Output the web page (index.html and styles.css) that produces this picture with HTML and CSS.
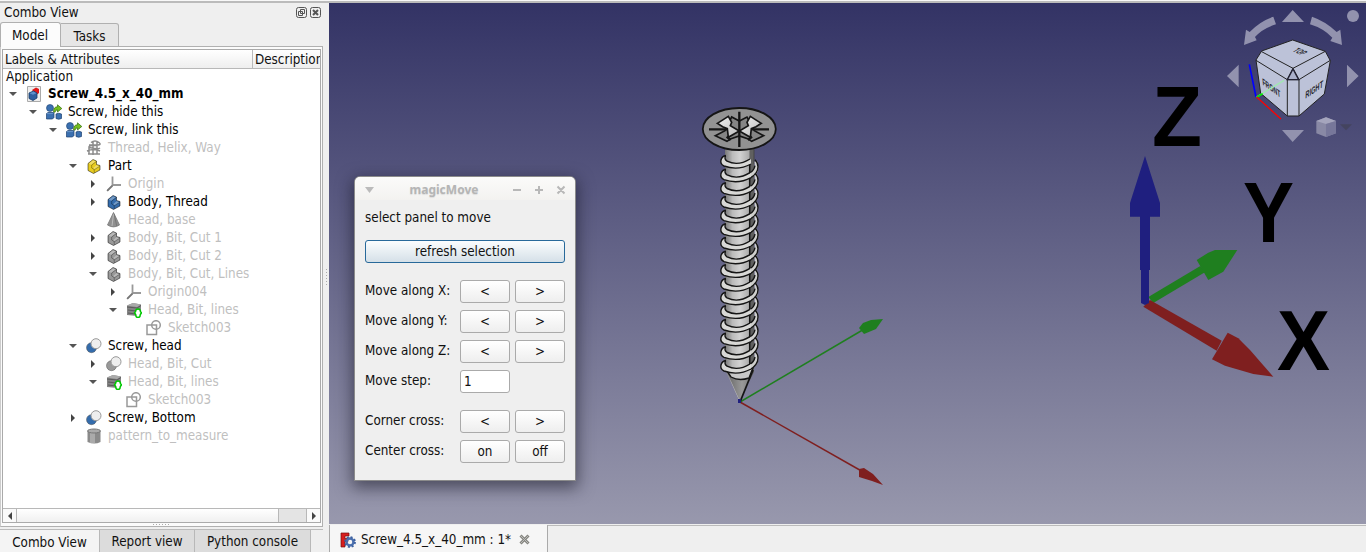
FILE: index.html
```html
<!DOCTYPE html>
<html lang="en">
<head>
<meta charset="utf-8">
<title>Screw_4.5_x_40_mm</title>
<link rel="stylesheet" href="styles.css">
</head>
<body>
<svg class="defs" width="0" height="0">
  <defs>
    <linearGradient id="steel"><stop offset="0" stop-color="#777"/><stop offset=".3" stop-color="#bbb"/><stop offset=".6" stop-color="#d2d2d2"/><stop offset="1" stop-color="#a8a8a8"/></linearGradient>
    <linearGradient id="tip"><stop offset="0" stop-color="#666"/><stop offset=".6" stop-color="#999"/><stop offset="1" stop-color="#777"/></linearGradient>
    <linearGradient id="arm" x1="0" y1="0" x2="1" y2="1"><stop offset="0" stop-color="#f0f0f0"/><stop offset="1" stop-color="#bbb"/></linearGradient>
    <symbol id="down" viewBox="0 0 10 10"><path d="M1 3h8L5 7z" fill="#555"/></symbol>
    <symbol id="right" viewBox="0 0 10 10"><path d="M3 1v8l4-4z" fill="#444"/></symbol>
    <symbol id="doc" viewBox="0 0 16 16"><path d="M1.500.5h13v15h-13z" fill="#eee" stroke="#aaa"/><path d="M6 4l4-2.500 3 1.500v4l-3 2z" fill="#e01818"/><path d="M3 7l4.500-2L11 7v5l-4 2.500L3 12.500z" fill="#2f5f9f" stroke="#153a66" stroke-width=".8"/><path d="M3.500 7.200l4-1.700 3 1.700L7 8.800z" fill="#5d90cc"/></symbol>
    <symbol id="group" viewBox="0 0 16 16"><circle cx="4" cy="4" r="3.500" fill="#3b70b0" stroke="#1c4170" stroke-width=".6"/><path d="M.5 9.500l1.500-1h6v5L6.500 15h-6z" fill="#3b70b0" stroke="#1c4170" stroke-width=".7"/><path d="M.8 9.600h5.500l1.200-.9" stroke="#7fa9d8" stroke-width=".7" fill="none"/><path d="M10 10q2.500-1.500 5.500 0v4.500q-2.800 1.500-5.500 0z" fill="#3b70b0" stroke="#1c4170" stroke-width=".7"/><path d="M7.500 7.800q0-5 4-5V.8l4.300 3.700-4.300 3.500V5.800q-2-.2-2.500 2.500z" fill="#75c020" stroke="#32680c" stroke-width=".7"/></symbol>
    <symbol id="helix" viewBox="0 0 16 16"><g fill="none" stroke="#8c8c8c" stroke-width="1.500"><path d="M5 2.500q4-3 8 0t-7 3q-6 1 0 2.500t8 0M1 11q7-3 13 0M2 14h12M7 2v13M11 2v12M3 5h10M3 7v7"/></g></symbol>
    <symbol id="solid" viewBox="0 0 16 16"><path d="M2 5.500l5-4 3.500 1.500v3.500l3.500 1v4.500l-6.500 3.500L2 12.500z" fill="currentColor" stroke="#000" stroke-opacity=".55" stroke-width=".9"/><path d="M2.800 5.700L7 2.300l2.800 1.200-4.500 3.300zM7 10.200l3.500-3 3 1-4.500 3z" fill="#fff" fill-opacity=".32"/><path d="M5.700 7v3l2.500 1.500v3.300M8.500 11.600l5-3.300M5.700 7l4.500-3.300" fill="none" stroke="#000" stroke-opacity=".4" stroke-width=".8"/></symbol>
    <symbol id="origin" viewBox="0 0 16 16"><path d="M6.500.5v9M6.500 9H15M6.500 9.500L1.500 14.500" fill="none" stroke="#999" stroke-width="1.800"/><path d="M1 15l5.500-5.500" stroke="#777" stroke-width="1.500"/></symbol>
    <symbol id="cone" viewBox="0 0 16 16"><path d="M7.500.5L13.500 13q-6 3.800-12 0z" fill="#909090" stroke="#777" stroke-width=".8"/><path d="M7.500 2L6 14" stroke="#bbb"/><path d="M8.200 2l2.500 12" stroke="#777"/></symbol>
    <symbol id="slab" viewBox="0 0 16 16"><path d="M1 3.500L7 1l8 1.500v9l-4 2.500-10-1z" fill="#858585"/><path d="M1 3.500L7 1l8 1.500-4 2.500z" fill="#aaa"/><path d="M1 5l10 1 4-2.500M2 8l8 1 4-2M2 11l8 1" stroke="#5a5a5a" fill="none"/><path d="M12 7q2.500 0 2.500 2.800l1 1-1.200 1.700q0 3-2.300 3t-2.300-3L8.500 10.800l1-1Q9.500 7 12 7z" fill="#fff" stroke="#00c800" stroke-width="1.500"/></symbol>
    <symbol id="sketch" viewBox="0 0 16 16"><g fill="none" stroke="#999" stroke-width="1.500"><path d="M1 5h9.500v9.500H1z"/><circle cx="10" cy="5" r="4.300"/></g></symbol>
    <symbol id="cut" viewBox="0 0 16 16"><circle cx="5.500" cy="9.700" r="5" fill="currentColor" stroke="#555" stroke-width=".5"/><circle cx="10" cy="5.700" r="5" fill="#eee" stroke="#999"/></symbol>
    <symbol id="cyl" viewBox="0 0 16 16"><path d="M1.500 3q6-3 13 0v11q-6 3-13 0z" fill="#8a8a8a"/><path d="M4 4h5v11H4z" fill="#aaa"/><ellipse cx="8" cy="3" rx="6.500" ry="2" fill="#aaa" stroke="#777"/></symbol>
    <g id="band">
      <path d="M726-6.500Q722-6 721-2Q720 2 724 4Q738 8.500 751 2L751-3Q738 4 727-1Q724-3 726-6.500z" fill="#d8d8d6"/>
      <path d="M726-6.500Q722-6 721-2Q720 2 724 4Q738 9 751 2M725.500-6Q724-3 727-.8Q738 4.500 750-3" fill="none" stroke="#151515" stroke-width="1.400"/>
    </g>
    <g id="ring">
      <path d="M750-3Q756-7 754.500-14L757-15Q760-6 756-1.500L751 2z" fill="#cfcfcd"/>
      <path d="M750 2.500Q758-2 758-9Q758-13 755-16M750-3Q754-5 755-10" fill="none" stroke="#151515" stroke-width="1.400"/>
      <use href="#band"/>
    </g>
  </defs>
</svg>
<div class="app">
  <aside class="dock">
    <header class="dock-title"><span>Combo View</span>
      <svg width="25" height="11" viewBox="0 0 25 11"><g fill="none" stroke="#555"><rect x=".5" y=".5" width="10" height="10" rx="2"/><path d="M4.500 2.500h4v4h-4zM2.500 4.500h4v4h-4z"/><rect x="14.500" y=".5" width="10" height="10" rx="2"/><path d="M17 3l5 5M22 3l-5 5" stroke-width="2"/></g></svg>
    </header>
    <nav class="tabs"><span class="tab active">Model</span><span class="tab">Tasks</span></nav>
    <section class="pane">
      <div class="tree">
        <div class="thead"><span class="c1">Labels &amp; Attributes</span><span class="c2">Description</span></div>
        <div class="app-row">Application</div>
        <ul class="rows">
          <li class="d0 bold"><svg class="ar"><use href="#down"/></svg><svg class="ic"><use href="#doc"/></svg>Screw_4.5_x_40_mm</li>
          <li class="d1"><svg class="ar"><use href="#down"/></svg><svg class="ic"><use href="#group"/></svg>Screw, hide this</li>
          <li class="d2"><svg class="ar"><use href="#down"/></svg><svg class="ic"><use href="#group"/></svg>Screw, link this</li>
          <li class="d3 off"><svg class="ar"></svg><svg class="ic"><use href="#helix"/></svg>Thread, Helix, Way</li>
          <li class="d3"><svg class="ar"><use href="#down"/></svg><svg class="ic yellow"><use href="#solid"/></svg>Part</li>
          <li class="d4 off"><svg class="ar"><use href="#right"/></svg><svg class="ic"><use href="#origin"/></svg>Origin</li>
          <li class="d4"><svg class="ar"><use href="#right"/></svg><svg class="ic blue"><use href="#solid"/></svg>Body, Thread</li>
          <li class="d4 off"><svg class="ar"></svg><svg class="ic"><use href="#cone"/></svg>Head, base</li>
          <li class="d4 off"><svg class="ar"><use href="#right"/></svg><svg class="ic gray"><use href="#solid"/></svg>Body, Bit, Cut 1</li>
          <li class="d4 off"><svg class="ar"><use href="#right"/></svg><svg class="ic gray"><use href="#solid"/></svg>Body, Bit, Cut 2</li>
          <li class="d4 off"><svg class="ar"><use href="#down"/></svg><svg class="ic gray"><use href="#solid"/></svg>Body, Bit, Cut, Lines</li>
          <li class="d5 off"><svg class="ar"><use href="#right"/></svg><svg class="ic"><use href="#origin"/></svg>Origin004</li>
          <li class="d5 off"><svg class="ar"><use href="#down"/></svg><svg class="ic"><use href="#slab"/></svg>Head, Bit, lines</li>
          <li class="d6 off"><svg class="ar"></svg><svg class="ic"><use href="#sketch"/></svg>Sketch003</li>
          <li class="d3"><svg class="ar"><use href="#down"/></svg><svg class="ic blue"><use href="#cut"/></svg>Screw, head</li>
          <li class="d4 off"><svg class="ar"><use href="#right"/></svg><svg class="ic gray"><use href="#cut"/></svg>Head, Bit, Cut</li>
          <li class="d4 off"><svg class="ar"><use href="#down"/></svg><svg class="ic"><use href="#slab"/></svg>Head, Bit, lines</li>
          <li class="d5 off"><svg class="ar"></svg><svg class="ic"><use href="#sketch"/></svg>Sketch003</li>
          <li class="d3"><svg class="ar"><use href="#right"/></svg><svg class="ic blue"><use href="#cut"/></svg>Screw, Bottom</li>
          <li class="d3 off"><svg class="ar"></svg><svg class="ic"><use href="#cyl"/></svg>pattern_to_measure</li>
        </ul>
        <div class="hscroll"><span class="sb"><svg width="10" height="10" viewBox="0 0 10 10"><path d="M7 1v8L3 5z" fill="#444"/></svg></span><span class="thumb"></span><span class="track"></span><span class="sb"><svg width="10" height="10"><use href="#right"/></svg></span></div>
      </div>
      <div class="grip"></div>
    </section>
    <nav class="btabs"><span class="active b1">Combo View</span><span class="b2">Report view</span><span class="b3">Python console</span></nav>
  </aside>
  <div class="splitter"></div>
  <main class="view">
    <svg class="scene" viewBox="329 3 1037 521" width="1037" height="521">
      <path d="M740 402L866 328" stroke="#1f7f1f" stroke-width="1.500"/>
      <path d="M859 328l4-5 8-3 12-1-7 10-12 5z" fill="#1f7f1f"/>
      <path d="M740 402l125 71" stroke="#7f1f1f" stroke-width="1.500"/>
      <path d="M859 469l5-1 9 6 10 11-11-4-13-4z" fill="#7f1f1f"/>
      <path d="M725 148h25v226l-10 28-11-24-4-8z" fill="url(#steel)"/>
      <path d="M749.500 148h4.500v224l-4.500 9z" fill="#606060"/>
      <path d="M749.700 160v215" stroke="#151515" stroke-width="1.500"/>
      <path d="M754 148v16" stroke="#444"/>
      <path d="M727 372h25l-12 29.500z" fill="url(#tip)"/>
      <path d="M753 370l-13 32" stroke="#151515" stroke-width="1.800"/>
      <path d="M725 368l6 9q8 4.500 18 1l5-13" fill="#c8c8c8" stroke="#151515" stroke-width="1.400"/>
      <use href="#band" y="162"/><use href="#ring" y="175.700"/><use href="#ring" y="189.300"/><use href="#ring" y="203"/><use href="#ring" y="216.700"/><use href="#ring" y="230.300"/><use href="#ring" y="244"/><use href="#ring" y="257.700"/><use href="#ring" y="271.300"/><use href="#ring" y="285"/><use href="#ring" y="298.700"/><use href="#ring" y="312.300"/><use href="#ring" y="326"/><use href="#ring" y="339.700"/><use href="#ring" y="353.300"/><use href="#ring" y="367"/>
      <ellipse cx="739.300" cy="129" rx="36.500" ry="21" fill="#929292" stroke="#151515" stroke-width="1.800"/>
      <g transform="translate(690 95) scale(.3333)" stroke="#151515" stroke-width="5" stroke-linejoin="miter">
        <path d="M76 122l29-15 20-41 23 12 23-12 22 41 28 15-36 17-12-8-25-8-25 8-12 8z" fill="#858585"/>
        <path d="M82 85l33-21 10 18-4 10 27 16-33 19-3-26-14-6z" fill="url(#arm)"/>
        <path d="M214 85l-33-21-10 18 4 10-27 16 33 19 3-26 14-6z" fill="url(#arm)"/>
        <path d="M148 50v106M57 103h55M183 103h54" stroke-width="7" fill="none"/>
        <path d="M110 125l12 10M186 125l-12 10" stroke-width="7"/>
      </g>
      <path d="M738 399h3v4h-3z" fill="#1f1f7f"/>
      <path d="M1148.300 297l52-31 5 6-52 31z" fill="#1f7f1f"/>
      <path d="M1196.700 260l11.600-7.300 6.700-2.700h22.300l-14 21.700-15 8.300z" fill="#1f7f1f"/>
      <path d="M1150 300l71.700 40.700-5 10-73.400-44z" fill="#7f1f1f"/>
      <path d="M1227.700 332.700l10.600 5.600 11.700 11.700 23.300 26.700-20-2.700-28.300-8.300-13-6.400z" fill="#7f1f1f"/>
      <path d="M1145 156l15 47v13.700h-10V270h-1v33l-4 2-4-2v-33h-1v-53.300h-10V203z" fill="#1f1f7f"/>
      <g class="axis"><text x="1152" y="146" textLength="50" lengthAdjust="spacingAndGlyphs">Z</text><text x="1243" y="242" textLength="51" lengthAdjust="spacingAndGlyphs">Y</text><text x="1277" y="370" textLength="53" lengthAdjust="spacingAndGlyphs">X</text></g>
      <g transform="translate(1210 0) scale(.3333)">
        <g fill="#9292ae"><path d="M248 30l34 36h-66zM86 194v68l-35-34zM411 194v68l35-34zM216 390h66l-34 36z"/><circle cx="429" cy="48" r="18"/>
          <path d="M190 50l8 23q-40 12-63 38l5 10-38 14 6-46 11 7q30-32 71-46zM306 50l-6 23q40 12 67 40l-6 10 35 12-5-46-11 7q-33-32-74-46z"/></g>
        <path d="M248 120l98 34 15 28-18 100-76 66h-35l-80-68-14-100 17-27z" fill="#bcc2d8" stroke="#222" stroke-width="3"/>
        <g fill="none" stroke="#222" stroke-width="3"><path d="M155 155l94 50 97-51M138 181l94 58h35l94-58M232 239v109M267 239v109M249 205l-17 34M249 205l18 34"/></g>
        <path d="M249 207l17 32h-34z" fill="#aab0ca" stroke="#223" stroke-width="4"/>
        <g class="cube"><text transform="matrix(.82 .6 .1 1 158 254)" textLength="66" lengthAdjust="spacingAndGlyphs">FRONT</text><text transform="matrix(.82 -.55 -.05 1 286 296)" textLength="64" lengthAdjust="spacingAndGlyphs">RIGHT</text><text transform="matrix(.8 .3 -.9 .5 246 154)" textLength="38" lengthAdjust="spacingAndGlyphs">TOP</text></g>
        <path d="M118 193l20 98" stroke="#00f" stroke-width="5"/><path d="M140 291l82-50" stroke="#a0e8b0" stroke-width="4"/><path d="M140 291l18-10" stroke="#0e0" stroke-width="5"/><path d="M140 291l73 66" stroke="#f00" stroke-width="4"/>
        <path d="M348 352l30 11v37l-30 11-29-11v-37z" fill="#8989a5"/><path d="M319 363l29 9 30-9-30-11z" fill="#a5a5bd"/><path d="M348 372l30-9v37l-30 11z" fill="#77779a"/><path d="M390 373h36l-18 18z" fill="#44445f"/>
      </g>
    </svg>
    <section class="dialog">
      <header><svg width="9" height="6" viewBox="0 0 9 6"><path d="M0 0h9L4.500 6z" fill="#bbb"/></svg><b>magicMove</b><svg width="53" height="10" viewBox="0 0 53 10" fill="none" stroke="#b8b8b8" stroke-width="2"><path d="M0 5h8M22 5h8M26 1v8M44.500 1.500l7 7M51.500 1.500l-7 7"/></svg></header>
      <p>select panel to move</p>
      <button class="refresh">refresh selection</button>
      <div class="form">
        <label>Move along X:</label><button>&lt;</button><button>&gt;</button>
        <label>Move along Y:</label><button>&lt;</button><button>&gt;</button>
        <label>Move along Z:</label><button>&lt;</button><button>&gt;</button>
        <label>Move step:</label><input value="1">
      </div>
      <div class="form second">
        <label>Corner cross:</label><button>&lt;</button><button>&gt;</button>
        <label>Center cross:</label><button>on</button><button>off</button>
      </div>
    </section>
    <footer class="docbar"><div class="doctab"><svg width="16" height="16" viewBox="0 0 16 16"><path d="M1 1h8v3H5v2.500h3v3H5V15H1z" fill="#d81e1e" stroke="#701010" stroke-width=".7"/><circle cx="10" cy="10" r="3.500" fill="none" stroke="#4a6fae" stroke-width="2.500"/><circle cx="10" cy="10" r="5" fill="none" stroke="#3d619f" stroke-width="1.800" stroke-dasharray="2 1.930"/></svg><span>Screw_4.5_x_40_mm : 1*</span><svg width="11" height="11" viewBox="0 0 11 11"><path d="M1.500 1.500l8 8M9.500 1.500l-8 8" stroke="#85857f" stroke-width="3"/><path d="M2 2l7 7M9 2L2 9" stroke="#bbb"/></svg></div></footer>
  </main>
</div>
</body>
</html>
```
FILE: styles.css
```css
* { box-sizing: border-box; }
body { margin: 0; background: #efefef; color: #111; font: 13.33px/18px "DejaVu Sans Condensed", "DejaVu Sans", sans-serif; font-stretch: condensed; overflow: hidden; }
.defs { position: absolute; }
.app { display: flex; width: 1366px; height: 552px; border-top: 1px solid #f8f8f8; }
.dock { width: 323px; display: flex; flex-direction: column; border-top: 2px solid #bbb; }
.splitter { width: 6px; border-top: 2px solid #bbb; display: flex; flex-direction: column; align-items: center; justify-content: center; }
.splitter::before { content: ""; width: 1px; height: 17px; background: repeating-linear-gradient(#aaa 0 1px, transparent 1px 3px); }
.dock-title { height: 20px; padding: 0 2px 0 4px; display: flex; justify-content: space-between; align-items: center; }
.tabs { display: flex; align-items: flex-end; height: 25px; margin-bottom: -1px; position: relative; }
.tab { height: 24px; width: 58px; border: 1px solid #b0b0b0; border-left: 0; border-radius: 0 3px 0 0; background: #e6e6e6; text-align: center; line-height: 25px; }
.tab.active { height: 25px; width: 61px; background: #fcfcfc; border-left: 1px solid #b0b0b0; border-bottom: 0; border-radius: 3px 3px 0 0; padding-right: 1px; }
.pane { height: 481px; border: 1px solid #b0b0b0; border-left-color: #ccc; padding: 2px 1px 0; background: #fbfbfb; }
.tree { height: 474px; width: 319px; border: 1px solid #aaa; background: #fff; display: flex; flex-direction: column; }
.thead { height: 19px; display: flex; flex: none; background: linear-gradient(#fff, #eee); border-bottom: 1px solid #b8b8b8; overflow: hidden; line-height: 19px; }
.c1 { width: 250px; padding-left: 2px; border-right: 1px solid #bbb; }
.c2 { flex: 1; width: 0; overflow: hidden; padding-left: 2px; white-space: nowrap; }
.app-row { height: 16px; line-height: 16px; padding-left: 3px; }
.rows { list-style: none; padding: 0; margin: 0; flex: 1; }
.rows li { display: flex; align-items: center; height: 18px; white-space: nowrap; color: #000; }
.rows li.off { color: #bfbfbf; }
.bold { font-weight: bold; }
.ar { width: 10px; height: 10px; margin-right: 8px; flex: none; }
.ic { width: 16px; height: 16px; margin-right: 6px; flex: none; }
.yellow { color: #e8cc20; } .blue { color: #346cac; } .gray { color: #999; }
.d0 { padding-left: 5px; } .d1 { padding-left: 25px; } .d2 { padding-left: 45px; } .d3 { padding-left: 65px; }
.d4 { padding-left: 85px; } .d5 { padding-left: 105px; } .d6 { padding-left: 125px; }
.hscroll { height: 14px; display: flex; flex: none; border-top: 1px solid #b8b8b8; }
.sb { width: 13px; display: flex; align-items: center; justify-content: center; background: #fafafa; }
.thumb { width: 263px; border: solid #b8b8b8; border-width: 0 1px; background: linear-gradient(#fff, #f0f0f0); }
.track { flex: 1; background: #e4e4e4; border-right: 1px solid #b8b8b8; }
.grip { width: 17px; height: 1px; margin: 1px auto; background: repeating-linear-gradient(90deg, #aaa 0 1px, transparent 1px 3px); }
.btabs { display: flex; margin-top: 2px; border-top: 1px solid #bbb; height: 23px; }
.btabs span { background: #dcdcdc; border-right: 1px solid #b8b8b8; text-align: center; line-height: 23px; }
.btabs .active { background: #f4f4f4; line-height: 25px; }
.b1 { width: 100px; } .b2 { width: 95px; } .b3 { width: 116px; }
.view { width: 1037px; position: relative; border-top: 2px solid #bbb; }
.scene { display: block; background: linear-gradient(#333365, #9898ad); }
.axis text { font: bold 85.500px "Liberation Sans", sans-serif; fill: #000; }
.cube text { font: bold 30px "Liberation Sans", sans-serif; fill: #25262c; }
.dialog { position: absolute; left: 26px; top: 174px; width: 220px; height: 303px; background: #efefef; border-radius: 5px 5px 0 0; box-shadow: 0 0 0 1px #8b8b8b, 0 5px 16px 3px rgba(20,20,35,.55); padding: 0 10px; }
.dialog header { height: 23px; margin: 0 -10px; padding: 2px 9px 0 10px; background: linear-gradient(#fbfbfa, #f3f2f0); border-radius: 5px 5px 0 0; display: flex; align-items: center; color: #b5b5b5; font-family: "Noto Sans", sans-serif; font-size: 12px; font-stretch: normal; }
.dialog header b { flex: 1; text-align: center; padding-left: 1px; text-shadow: 0 1px 1px #ddd; }
.dialog p { margin: 8px 0 14px; height: 18px; line-height: 19px; }
.dialog button, .dialog input { height: 23px; border: 1px solid #aaa; border-radius: 3px; padding: 0; font: inherit; color: #111; background: linear-gradient(#fff, #eee); }
.dialog input { width: 50px; background: #fff; padding: 0 3px; }
.dialog .refresh { display: block; width: 200px; border-color: #28699a; background: linear-gradient(#fbfdfe, #d5e0e8); }
.form { display: grid; grid-template-columns: 90px 50px 50px; grid-auto-rows: 23px; gap: 7px 5px; margin-top: 17px; }
.form label { line-height: 22px; white-space: nowrap; }
.docbar { height: 28px; display: flex; background: #efefef; padding-top: 1px; }
.docbar::after { content: ""; flex: 1; border-top: 1px solid #bbb; }
.doctab { width: 219px; border: solid #aaa; border-width: 0 1px; background: #f6f6f6; display: flex; align-items: center; padding: 2px 0 0 10px; }
.doctab span { margin: 0 8px 0 5px; white-space: nowrap; }
```
